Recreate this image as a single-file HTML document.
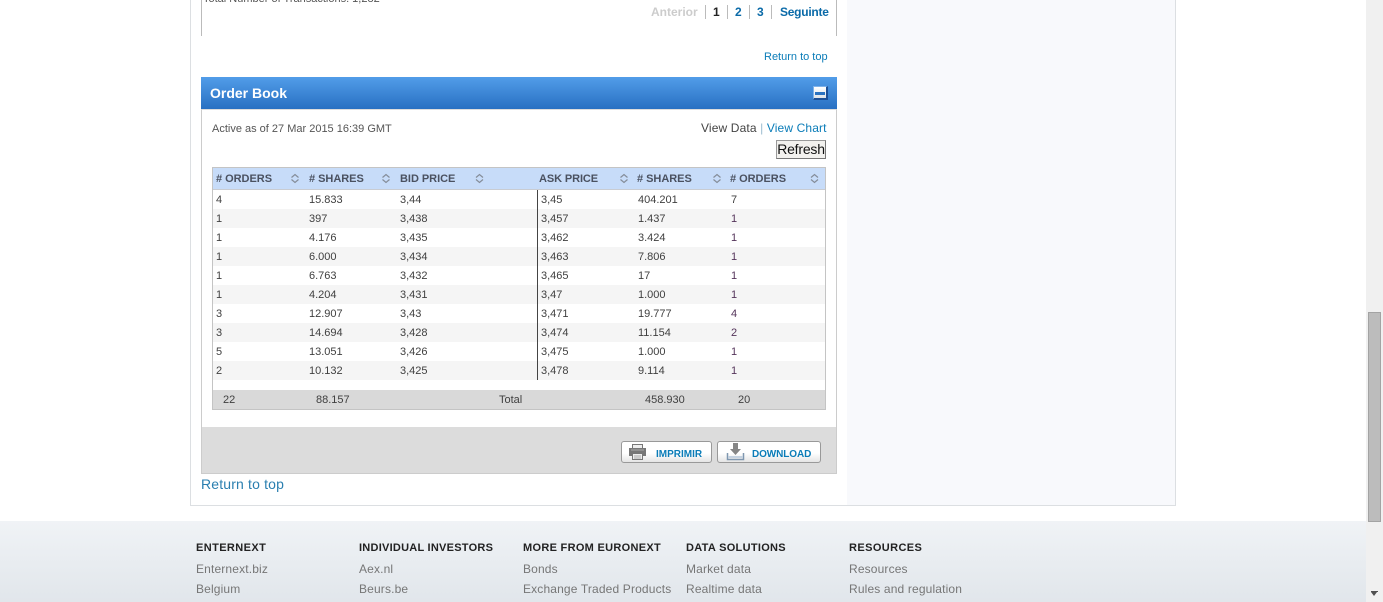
<!DOCTYPE html>
<html><head><meta charset="utf-8"><style>
html,body{margin:0;padding:0;background:#fff;width:1383px;height:602px;overflow:hidden}
body{position:relative;font-family:"Liberation Sans",Arial,sans-serif;font-size:11px;color:#3f3f3f}
.a{position:absolute;white-space:nowrap;line-height:14px}
.b{position:absolute}
.h{font-weight:bold;color:#4a5160;top:172px;letter-spacing:-.03px}
.l{color:#0a7cb8}
.f{font-size:12px;color:#767676;line-height:14px;letter-spacing:.15px}
.ft{font-weight:bold;color:#222;letter-spacing:.3px;line-height:14px;top:541px}
.p{color:#54345a}
</style></head><body>
<div class="b" style="left:190px;top:-1px;width:984px;height:505px;border:1px solid #dcdfe2"></div>
<div class="b" style="left:847px;top:0;width:328px;height:505px;background:#f8f9fc"></div>
<div class="b" style="left:201px;top:0;width:1px;height:36px;background:#bbb"></div>
<div class="b" style="left:836px;top:0;width:1px;height:36px;background:#bbb"></div>
<div class="a" style="left:203px;top:-8px;color:#555">Total Number of Transactions: 1,282</div>
<div class="a" style="left:651px;top:5px;font-size:12px;font-weight:bold;color:#ccc">Anterior</div>
<div class="b" style="left:705px;top:5px;width:1px;height:14px;background:#bbb"></div>
<div class="a" style="left:713px;top:5px;font-size:12px;font-weight:bold;color:#222">1</div>
<div class="b" style="left:727px;top:5px;width:1px;height:14px;background:#bbb"></div>
<div class="a" style="left:735px;top:5px;font-size:12px;font-weight:bold;color:#0a6aa8">2</div>
<div class="b" style="left:749px;top:5px;width:1px;height:14px;background:#bbb"></div>
<div class="a" style="left:757px;top:5px;font-size:12px;font-weight:bold;color:#0a6aa8">3</div>
<div class="b" style="left:771px;top:5px;width:1px;height:14px;background:#bbb"></div>
<div class="a" style="left:780px;top:5px;font-size:12px;font-weight:bold;color:#0a6aa8;letter-spacing:-.25px">Seguinte</div>
<div class="a l" style="left:764px;top:50px">Return to top</div>

<div class="b" style="left:201px;top:77px;width:636px;height:32px;background:linear-gradient(#529de9,#2870c2)"></div>
<div class="b" style="left:201px;top:109px;width:634px;height:363px;border:1px solid #ccc;border-top:1px solid #ddd"></div>
<div class="a" style="left:210px;top:85px;font-size:14px;line-height:16px;font-weight:bold;color:#fff">Order Book</div>
<div class="b" style="left:813px;top:86px;width:15px;height:14px;background:linear-gradient(#fff,#dde2e8);border:1px solid #7fb2ea;border-right:2px solid #1c4f96;border-bottom:2px solid #1c4f96;box-sizing:border-box"></div>
<div class="b" style="left:815px;top:92px;width:10px;height:3px;background:#2b72c0"></div>

<div class="a" style="left:212px;top:122px;color:#555">Active as of 27 Mar 2015 16:39 GMT</div>
<div class="a" style="left:701px;top:121px;font-size:12px;color:#444;letter-spacing:.13px">View Data <span style="color:#9bbcd0">|</span> <span class="l">View Chart</span></div>
<div class="b" style="left:776px;top:140px;width:50px;height:19px;box-sizing:border-box;border:1px solid #999;border-right-color:#777;border-bottom-color:#777;background:#f2f1ee;font-size:14px;line-height:17px;color:#111;text-align:center;letter-spacing:-.2px">Refresh</div>

<div class="b" style="left:212px;top:167px;width:612px;height:241px;border:1px solid #c4c4c4"></div>
<div class="b" style="left:213px;top:168px;width:612px;height:21px;background:#c7dcf9"></div>
<div class="b" style="left:213px;top:189px;width:612px;height:1px;background:#c9ccd2"></div>
<div class="b" style="left:213px;top:209px;width:612px;height:19px;background:#f5f5f5"></div>
<div class="b" style="left:213px;top:247px;width:612px;height:19px;background:#f5f5f5"></div>
<div class="b" style="left:213px;top:285px;width:612px;height:19px;background:#f5f5f5"></div>
<div class="b" style="left:213px;top:323px;width:612px;height:19px;background:#f5f5f5"></div>
<div class="b" style="left:213px;top:361px;width:612px;height:19px;background:#f5f5f5"></div>
<div class="b" style="left:537px;top:190px;width:1px;height:190px;background:#444"></div>
<div class="b" style="left:213px;top:390px;width:612px;height:19px;background:#d9d9d9"></div>

<div class="a h" style="left:216px"># ORDERS</div>
<div class="a h" style="left:309px"># SHARES</div>
<div class="a h" style="left:400px">BID PRICE</div>
<div class="a h" style="left:539px;letter-spacing:-.1px">ASK PRICE</div>
<div class="a h" style="left:637px"># SHARES</div>
<div class="a h" style="left:730px"># ORDERS</div>
<svg class="b" style="left:0;top:0" width="1383" height="200" fill="none" stroke="#858d99" stroke-width="1.200">
<path d="M291.500 177.500l3.500-3 3.500 3M291.500 179.500l3.500 3 3.500-3"/>
<path d="M382.500 177.500l3.500-3 3.500 3M382.500 179.500l3.500 3 3.500-3"/>
<path d="M476 177.500l3.500-3 3.500 3M476 179.500l3.500 3 3.500-3"/>
<path d="M620.500 177.500l3.500-3 3.500 3M620.500 179.500l3.500 3 3.500-3"/>
<path d="M713.500 177.500l3.500-3 3.500 3M713.500 179.500l3.500 3 3.500-3"/>
<path d="M811 177.500l3.500-3 3.500 3M811 179.500l3.500 3 3.500-3"/>
</svg>

<div class="a" style="left:216px;top:193px">4</div><div class="a" style="left:309px;top:193px">15.833</div><div class="a" style="left:400px;top:193px">3,44</div><div class="a" style="left:541px;top:193px">3,45</div><div class="a" style="left:638px;top:193px">404.201</div><div class="a" style="left:731px;top:193px">7</div>
<div class="a" style="left:216px;top:212px">1</div><div class="a" style="left:309px;top:212px">397</div><div class="a" style="left:400px;top:212px">3,438</div><div class="a" style="left:541px;top:212px">3,457</div><div class="a" style="left:638px;top:212px">1.437</div><div class="a p" style="left:731px;top:212px">1</div>
<div class="a" style="left:216px;top:231px">1</div><div class="a" style="left:309px;top:231px">4.176</div><div class="a" style="left:400px;top:231px">3,435</div><div class="a" style="left:541px;top:231px">3,462</div><div class="a" style="left:638px;top:231px">3.424</div><div class="a p" style="left:731px;top:231px">1</div>
<div class="a" style="left:216px;top:250px">1</div><div class="a" style="left:309px;top:250px">6.000</div><div class="a" style="left:400px;top:250px">3,434</div><div class="a" style="left:541px;top:250px">3,463</div><div class="a" style="left:638px;top:250px">7.806</div><div class="a p" style="left:731px;top:250px">1</div>
<div class="a" style="left:216px;top:269px">1</div><div class="a" style="left:309px;top:269px">6.763</div><div class="a" style="left:400px;top:269px">3,432</div><div class="a" style="left:541px;top:269px">3,465</div><div class="a" style="left:638px;top:269px">17</div><div class="a p" style="left:731px;top:269px">1</div>
<div class="a" style="left:216px;top:288px">1</div><div class="a" style="left:309px;top:288px">4.204</div><div class="a" style="left:400px;top:288px">3,431</div><div class="a" style="left:541px;top:288px">3,47</div><div class="a" style="left:638px;top:288px">1.000</div><div class="a p" style="left:731px;top:288px">1</div>
<div class="a" style="left:216px;top:307px">3</div><div class="a" style="left:309px;top:307px">12.907</div><div class="a" style="left:400px;top:307px">3,43</div><div class="a" style="left:541px;top:307px">3,471</div><div class="a" style="left:638px;top:307px">19.777</div><div class="a p" style="left:731px;top:307px">4</div>
<div class="a" style="left:216px;top:326px">3</div><div class="a" style="left:309px;top:326px">14.694</div><div class="a" style="left:400px;top:326px">3,428</div><div class="a" style="left:541px;top:326px">3,474</div><div class="a" style="left:638px;top:326px">11.154</div><div class="a p" style="left:731px;top:326px">2</div>
<div class="a" style="left:216px;top:345px">5</div><div class="a" style="left:309px;top:345px">13.051</div><div class="a" style="left:400px;top:345px">3,426</div><div class="a" style="left:541px;top:345px">3,475</div><div class="a" style="left:638px;top:345px">1.000</div><div class="a p" style="left:731px;top:345px">1</div>
<div class="a" style="left:216px;top:364px">2</div><div class="a" style="left:309px;top:364px">10.132</div><div class="a" style="left:400px;top:364px">3,425</div><div class="a" style="left:541px;top:364px">3,478</div><div class="a" style="left:638px;top:364px">9.114</div><div class="a p" style="left:731px;top:364px">1</div>

<div class="a" style="left:223px;top:393px">22</div><div class="a" style="left:316px;top:393px">88.157</div><div class="a" style="left:499px;top:393px">Total</div><div class="a" style="left:645px;top:393px">458.930</div><div class="a" style="left:738px;top:393px">20</div>

<div class="b" style="left:202px;top:427px;width:634px;height:46px;background:#dcdcdc"></div>
<div class="b" style="left:621px;top:441px;width:91px;height:22px;box-sizing:border-box;border:1px solid #999;border-radius:3px;background:linear-gradient(#fff 55%,#e4e4e4)"></div>
<div class="b" style="left:717px;top:441px;width:104px;height:22px;box-sizing:border-box;border:1px solid #999;border-radius:3px;background:linear-gradient(#fff 55%,#e4e4e4)"></div>
<svg class="b" style="left:628px;top:442px" width="22" height="20">
<rect x="4.500" y="2.500" width="10" height="4" fill="#eee" stroke="#777"/>
<rect x="1" y="6" width="17" height="8" fill="#777"/>
<path d="M3 8h13" stroke="#aaa"/>
<rect x="4.500" y="11.500" width="10" height="6" fill="#eee" stroke="#777"/>
<path d="M6 14h7M6 16h7" stroke="#aaa"/>
</svg>
<svg class="b" style="left:726px;top:442px" width="22" height="20">
<path d="M7 1h5v6h3l-5.500 6-5.500-6h3z" fill="#858585"/>
<path d="M1.500 11v6.500h16v-6.500" fill="none" stroke="#7f97b0" stroke-width="1.500"/>
<path d="M2 15h15" stroke="#c5d2e0" stroke-width="2"/>
</svg>
<div class="a" style="left:656px;top:448px;font-size:10px;font-weight:bold;color:#0a7cb8">IMPRIMIR</div>
<div class="a" style="left:752px;top:448px;font-size:10px;font-weight:bold;color:#0a7cb8;letter-spacing:-.1px">DOWNLOAD</div>
<div class="a" style="left:201px;top:476px;font-size:14px;line-height:16px;color:#2a7fb0;letter-spacing:.16px">Return to top</div>

<div class="b" style="left:0;top:521px;width:1366px;height:81px;background:linear-gradient(#f0f3f6,#e1e6eb)"></div>
<div class="a ft" style="left:196px;letter-spacing:.4px">ENTERNEXT</div>
<div class="a ft" style="left:359px;letter-spacing:.25px">INDIVIDUAL INVESTORS</div>
<div class="a ft" style="left:523px">MORE FROM EURONEXT</div>
<div class="a ft" style="left:686px">DATA SOLUTIONS</div>
<div class="a ft" style="left:849px;letter-spacing:.4px">RESOURCES</div>
<div class="a f" style="left:196px;top:562px">Enternext.biz</div>
<div class="a f" style="left:196px;top:582px">Belgium</div>
<div class="a f" style="left:359px;top:562px">Aex.nl</div>
<div class="a f" style="left:359px;top:582px">Beurs.be</div>
<div class="a f" style="left:523px;top:562px">Bonds</div>
<div class="a f" style="left:523px;top:582px">Exchange Traded Products</div>
<div class="a f" style="left:686px;top:562px">Market data</div>
<div class="a f" style="left:686px;top:582px">Realtime data</div>
<div class="a f" style="left:849px;top:562px">Resources</div>
<div class="a f" style="left:849px;top:582px">Rules and regulation</div>

<div class="b" style="left:1366px;top:0;width:17px;height:602px;background:#f0f0f0"></div>
<div class="b" style="left:1368px;top:312px;width:13px;height:210px;box-sizing:border-box;background:#bcbcbc;border:1px solid #a3a3a3"></div>
<div class="b" style="left:1371px;top:591px;width:7px;height:1px;background:#505050"></div>
<div class="b" style="left:1371px;top:592px;width:0;height:0;border-left:3.500px solid transparent;border-right:3.500px solid transparent;border-top:4px solid #505050"></div>
</body></html>
